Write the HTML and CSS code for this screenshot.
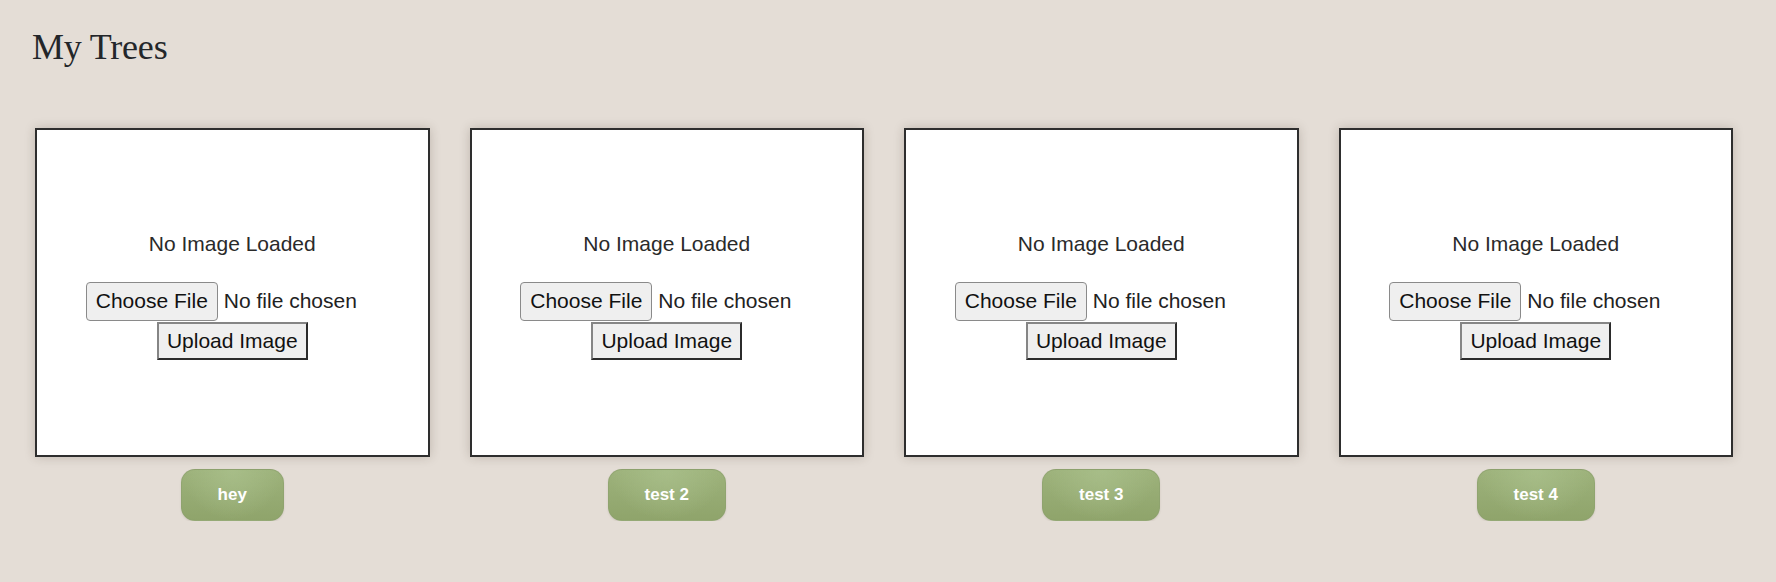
FILE: index.html
```html
<!DOCTYPE html>
<html lang="en">
<head>
<meta charset="utf-8">
<title>My Trees</title>
<link rel="stylesheet" href="styles.css">
</head>
<body>
<h1 class="title">My Trees</h1>
<main class="trees">
  <section class="tree">
    <div class="card">
      <p class="empty">No Image Loaded</p>
      <form class="upload">
        <input class="file" type="file">
        <button class="upload-btn" type="button">Upload Image</button>
      </form>
    </div>
    <button class="name-btn" type="button">hey</button>
  </section>
  <section class="tree">
    <div class="card">
      <p class="empty">No Image Loaded</p>
      <form class="upload">
        <input class="file" type="file">
        <button class="upload-btn" type="button">Upload Image</button>
      </form>
    </div>
    <button class="name-btn" type="button">test 2</button>
  </section>
  <section class="tree">
    <div class="card">
      <p class="empty">No Image Loaded</p>
      <form class="upload">
        <input class="file" type="file">
        <button class="upload-btn" type="button">Upload Image</button>
      </form>
    </div>
    <button class="name-btn" type="button">test 3</button>
  </section>
  <section class="tree">
    <div class="card">
      <p class="empty">No Image Loaded</p>
      <form class="upload">
        <input class="file" type="file">
        <button class="upload-btn" type="button">Upload Image</button>
      </form>
    </div>
    <button class="name-btn" type="button">test 4</button>
  </section>
</main>
</body>
</html>
```

FILE: styles.css
```css
html, body {
  margin: 0;
  padding: 0;
}

body {
  background: #e4ddd6;
  color: #222;
  font-family: "Liberation Sans", Arial, sans-serif;
}

.title {
  margin: 27px 0 0 32px;
  font-family: "Liberation Serif", "Times New Roman", serif;
  font-weight: 400;
  font-size: 36px;
  line-height: 40px;
  color: #23262a;
  letter-spacing: -0.2px;
}

.trees {
  display: grid;
  grid-template-columns: repeat(4, 1fr);
  column-gap: 40px;
  padding: 0 43px 0 35px;
  margin-top: 61px;
}

.tree {
  display: flex;
  flex-direction: column;
  align-items: center;
  gap: 12px;
}

.card {
  box-sizing: border-box;
  width: 100%;
  height: 329px;
  background: #fff;
  border: 2px solid #2e2e2e;
  box-shadow: 0 0 10px rgba(60, 45, 30, 0.22);
  display: flex;
  flex-direction: column;
  align-items: center;
  justify-content: center;
  padding-top: 6px;
}

.empty {
  margin: 0 0 26px;
  font-size: 21px;
  line-height: 24px;
  color: #2a2a2a;
}

.upload {
  display: flex;
  flex-direction: column;
  align-items: center;
  gap: 1px;
}

.file {
  width: 293px;
  font-family: "Liberation Sans", Arial, sans-serif;
  font-size: 21px;
  line-height: 24px;
  color: #222;
}

.file::file-selector-button {
  font-family: "Liberation Sans", Arial, sans-serif;
  font-size: 21px;
  line-height: 24px;
  color: #111;
  background: #efefef;
  border: 1px solid #8a8a8a;
  border-radius: 4px;
  padding: 6px 9px 7px;
  margin: 0 6px 0 0;
}

.upload-btn {
  font-family: "Liberation Sans", Arial, sans-serif;
  font-size: 21px;
  line-height: 24px;
  color: #111;
  background: #efefef;
  border: 2px solid;
  border-color: #858585 #2b2b2b #2b2b2b #858585;
  border-radius: 0;
  padding: 5px 8px;
}

.name-btn {
  height: 52px;
  padding: 0 36px;
  border: 1px solid rgba(140, 160, 110, 0.6);
  border-radius: 14px;
  background: radial-gradient(ellipse at 50% 0%, #a7bd88 0%, rgba(167, 189, 136, 0) 70%),
              linear-gradient(180deg, #9db27b 0%, #8fa46b 100%);
  color: #fff;
  font-family: "Liberation Sans", Arial, sans-serif;
  font-weight: 700;
  font-size: 17px;
  box-shadow: 0 1px 2px rgba(80, 70, 50, 0.15);
}
```
